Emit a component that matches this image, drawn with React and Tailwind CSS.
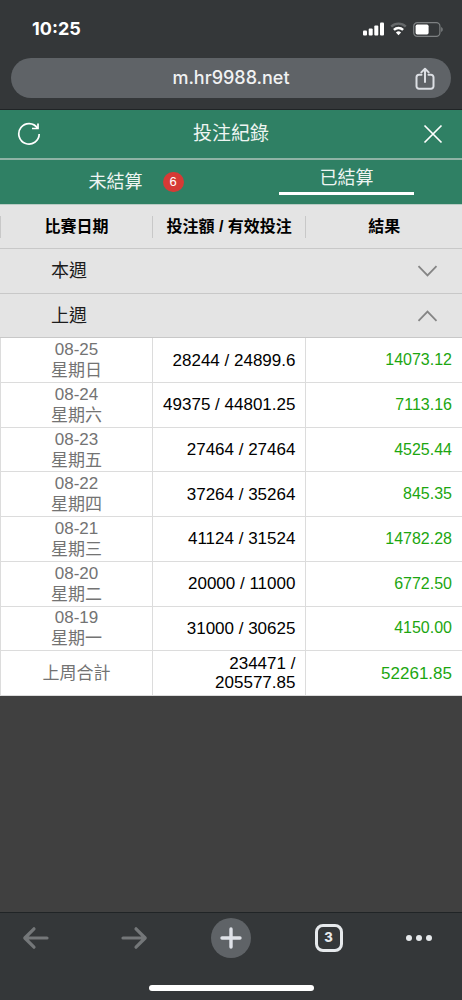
import React, { useState } from 'react';

const days = [
  { date: '08-25', day: '星期日', bet: '28244 / 24899.6', result: '14073.12' },
  { date: '08-24', day: '星期六', bet: '49375 / 44801.25', result: '7113.16' },
  { date: '08-23', day: '星期五', bet: '27464 / 27464', result: '4525.44' },
  { date: '08-22', day: '星期四', bet: '37264 / 35264', result: '845.35' },
  { date: '08-21', day: '星期三', bet: '41124 / 31524', result: '14782.28' },
  { date: '08-20', day: '星期二', bet: '20000 / 11000', result: '6772.50' },
  { date: '08-19', day: '星期一', bet: '31000 / 30625', result: '4150.00' },
];

const StatusBar = () => (
  <div className="flex h-[58px] items-center justify-between pl-8 pr-[18px]">
    <span className="text-lg font-bold leading-5 text-white">10:25</span>
    <div className="flex items-center gap-[6px]">
      <svg width="21" height="14" viewBox="0 0 21 14" fill="#fff">
        <rect x="0" y="8.5" width="4" height="5" rx="1" />
        <rect x="5.7" y="6.5" width="4" height="7" rx="1" />
        <rect x="11.3" y="3.5" width="4" height="10" rx="1" />
        <rect x="17" y="0.5" width="4" height="13" rx="1" />
      </svg>
      <svg width="17" height="14" viewBox="0 0 17 14" fill="none">
        <path d="M1.2 4.6a10.5 10.5 0 0 1 14.6 0" stroke="#66696b" strokeWidth="2.4" />
        <path d="M3.9 7.9a6.6 6.6 0 0 1 9.2 0" stroke="#fff" strokeWidth="2.4" />
        <path d="M8.5 13.2 5.9 10.6a3.7 3.7 0 0 1 5.2 0z" fill="#fff" />
      </svg>
      <svg width="31" height="15" viewBox="0 0 31 15" fill="none">
        <rect x="0.7" y="0.7" width="26.2" height="13.6" rx="3.6" stroke="#7d8082" strokeWidth="1.2" />
        <rect x="2.6" y="2.6" width="13" height="9.8" rx="1.6" fill="#fff" />
        <path d="M28.2 5v5c1-.4 1.5-1.4 1.5-2.5s-.5-2.1-1.5-2.5z" fill="#7d8082" />
      </svg>
    </div>
  </div>
);

const AddressBar = () => (
  <div className="px-[11px] pb-[11px]">
    <div className="relative flex h-10 items-center justify-center rounded-full bg-[#5f6367]">
      <span className="text-lg font-medium text-[#f1f2f3]">m.hr9988.net</span>
      <button aria-label="Share" className="absolute right-[15px] top-[9px]">
        <svg width="22" height="24" viewBox="0 0 22 24" fill="none" stroke="#dcdfe4" strokeWidth="2" strokeLinecap="round" strokeLinejoin="round">
          <path d="M7.5 7.8H5a2.5 2.5 0 0 0-2.5 2.5v9A2.5 2.5 0 0 0 5 21.8h12a2.5 2.5 0 0 0 2.5-2.5v-9A2.5 2.5 0 0 0 17 7.8h-2.5" />
          <path d="M11 15V2M7.3 5.4 11 1.7l3.7 3.7" />
        </svg>
      </button>
    </div>
  </div>
);

const PageHeader = () => (
  <header className="flex h-[50px] items-center justify-between border-b-2 border-[#8fb3a5] px-[17px]">
    <button aria-label="重新整理">
      <svg width="24" height="24" viewBox="0 0 24 24" fill="none" stroke="#fff" strokeWidth="1.7">
        <path d="M20.5 6.2A10.2 10.2 0 1 0 22.2 12" />
        <path d="M21 1.5v5h-6" />
      </svg>
    </button>
    <h1 className="text-[19px] text-[#eef5f2]">投注紀錄</h1>
    <button aria-label="關閉">
      <svg width="24" height="24" viewBox="0 0 24 24" fill="none" stroke="#fff" strokeWidth="1.7">
        <path d="M3.5 3.5l17 17M20.5 3.5l-17 17" />
      </svg>
    </button>
  </header>
);

const Tabs = () => (
  <nav className="grid h-[45px] grid-cols-2 border-b border-[#b9cbc4] text-lg leading-6 text-[#eef5f2]">
    <button className="flex items-center justify-center">
      <span className="relative">
        未結算
        <span className="absolute left-full top-1/2 ml-5 flex h-5 w-[21px] -translate-y-1/2 items-center justify-center rounded-full bg-[#d63a35] text-[13px] text-white">
          6
        </span>
      </span>
    </button>
    <button className="flex items-start justify-center pt-[6px]">
      <span className="w-[135px] border-b-[3px] border-white pb-[2px]">已結算</span>
    </button>
  </nav>
);

const WeekRow = ({ label, open, onClick }) => (
  <tr className="h-11">
    <td colSpan={3} className="border-b border-[#c8c8c8] bg-[#e4e4e4] p-0">
      <button
        onClick={onClick}
        aria-expanded={open}
        className="flex w-full items-center justify-between pl-[51px] pr-6 text-lg leading-6 text-[#1c1c1c]"
      >
        {label}
        <svg width="21" height="12" viewBox="0 0 21 12" fill="none" stroke="#858585" strokeWidth="1.8">
          {open ? <path d="M1.5 10.8 10.5 1.5l9 9.3" /> : <path d="M1.5 1.2l9 9.3 9-9.3" />}
        </svg>
      </button>
    </td>
  </tr>
);

const HeadCell = ({ children }) => (
  <th scope="col" className="w-1/3 border-b border-[#c8c8c8] bg-[#e4e4e4] p-0 font-bold first:w-[33%] last:w-[34%]">
    <div className="border-l border-[#c8c8c8] text-base leading-[22px]">{children}</div>
  </th>
);

const cell = 'border-b border-l border-[#dcdcdc] bg-white py-0';

const App = () => {
  const [thisWeek, setThisWeek] = useState(false);
  const [lastWeek, setLastWeek] = useState(true);

  return (
    <div className="flex min-h-screen flex-col bg-[#404040]">
      {/* Browser top */}
      <div className="border-b border-[#202426] bg-[#343739] font-['Inter',sans-serif]">
        <StatusBar />
        <AddressBar />
      </div>

      {/* Bet records */}
      <main className="flex-1 font-['Liberation_Sans','Noto_Sans_CJK_TC',sans-serif]">
        <div className="bg-[#2f8064]">
          <PageHeader />
          <Tabs />
        </div>
        <table className={`w-full table-fixed border-separate border-spacing-0 text-[17px] leading-[19px] text-black ${lastWeek ? 'h-[491px]' : ''}`}>
          <thead>
            <tr className="h-11">
              <HeadCell>比賽日期</HeadCell>
              <HeadCell>投注額 / 有效投注</HeadCell>
              <HeadCell>結果</HeadCell>
            </tr>
          </thead>
          <tbody>
            <WeekRow label="本週" open={thisWeek} onClick={() => setThisWeek(!thisWeek)} />
            <WeekRow label="上週" open={lastWeek} onClick={() => setLastWeek(!lastWeek)} />
            {lastWeek && days.map((row) => (
              <tr key={row.date} className="h-11">
                <td className={`${cell} text-center leading-[21px] text-[#737373]`}>
                  {row.date}
                  <br />
                  {row.day}
                </td>
                <td className={`${cell} pl-1 pr-[10px] text-right`}>{row.bet}</td>
                <td className={`${cell} pr-[10px] text-right text-base text-[#1ca610]`}>{row.result}</td>
              </tr>
            ))}
            {lastWeek && (
              <tr className="h-11">
                <td className={`${cell} text-center text-[#737373]`}>上周合計</td>
                <td className={`${cell} pl-1 pr-[10px] text-right`}>234471 / 205577.85</td>
                <td className={`${cell} pr-[10px] text-right text-[#1ca610]`}>52261.85</td>
              </tr>
            )}
          </tbody>
        </table>
      </main>

      {/* Browser toolbar */}
      <footer className="flex h-[88px] flex-col justify-between border-t border-[#202426] bg-[#343739] pb-[9px] pt-[5px] font-['Inter',sans-serif]">
        <div className="flex items-center justify-between px-4">
          <button aria-label="Back" className="flex h-10 w-10 items-center justify-center">
            <svg width="28" height="28" viewBox="0 0 28 28" fill="none" stroke="#747779" strokeWidth="3.2" strokeLinecap="round" strokeLinejoin="round">
              <path d="M25 14H3M12 4.8 2.8 14l9.2 9.2" />
            </svg>
          </button>
          <button aria-label="Forward" className="flex h-10 w-10 items-center justify-center">
            <svg width="28" height="28" viewBox="0 0 28 28" fill="none" stroke="#747779" strokeWidth="3.2" strokeLinecap="round" strokeLinejoin="round">
              <path d="M3 14h22M16 4.8 25.2 14 16 23.2" />
            </svg>
          </button>
          <button aria-label="New tab" className="flex h-10 w-10 items-center justify-center rounded-full bg-[#5f6367]">
            <svg width="24" height="24" viewBox="0 0 24 24" fill="none" stroke="#dfe2e8" strokeWidth="3.4" strokeLinecap="round">
              <path d="M12 3v18M3 12h18" />
            </svg>
          </button>
          <button aria-label="Tabs" className="flex h-10 w-10 items-center justify-center">
            <span className="flex h-7 w-7 items-center justify-center rounded-lg border-[3px] border-[#e6e9ec] text-[13px] font-extrabold text-[#e6e9ec]">
              3
            </span>
          </button>
          <button aria-label="Menu" className="flex h-10 w-10 items-center">
            <svg width="28" height="8" viewBox="0 0 28 8" fill="#e6e9ec">
              <circle cx="3" cy="4" r="3" />
              <circle cx="13" cy="4" r="3" />
              <circle cx="23" cy="4" r="3" />
            </svg>
          </button>
        </div>
        <div className="mx-auto h-[6px] w-[165px] rounded-full bg-white" />
      </footer>
    </div>
  );
};

export default App;
